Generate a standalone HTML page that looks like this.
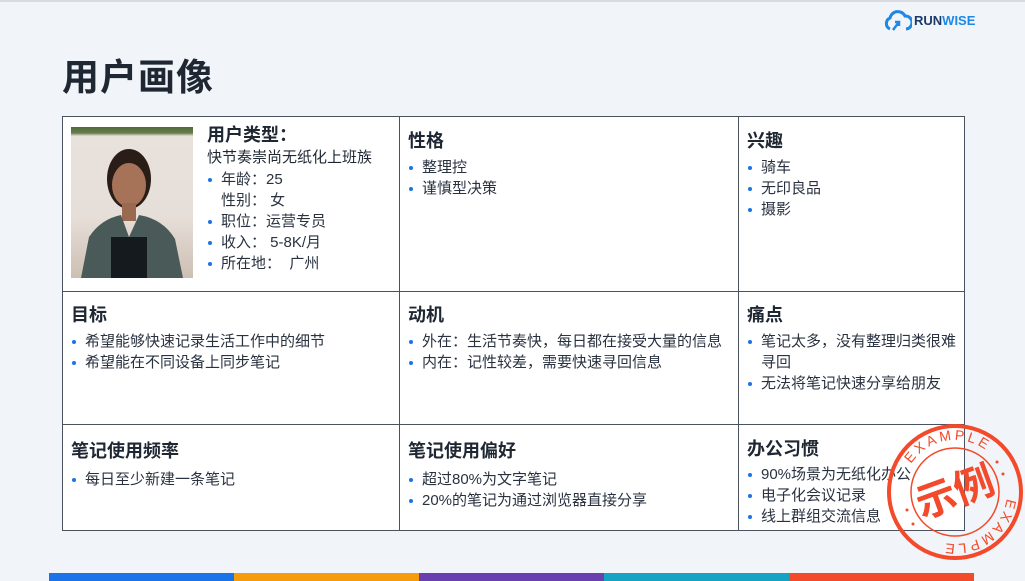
<!DOCTYPE html>
<html><head><meta charset="utf-8"><style>
*{margin:0;padding:0;box-sizing:border-box}
body{width:1025px;height:581px;background:#f1f4f8;font-family:"Liberation Sans","Noto Sans CJK SC",sans-serif;color:#1f2733;position:relative;overflow:hidden}
.top{position:absolute;left:0;top:0;width:1025px;height:2px;background:#d8dbe0}
h1{position:absolute;left:62px;top:54px;font-size:37px;font-weight:700;color:#1f2733;letter-spacing:1px;line-height:48px}
.tbl{position:absolute;left:62px;top:116px;width:903px;height:415px;background:#fff;border:1px solid #4a5260}
.c{position:absolute;padding:0 8px}
.vl{position:absolute;top:0;bottom:0;width:1px;background:#4a5260}
.hl{position:absolute;left:0;right:0;height:1px;background:#4a5260}
.h{font-size:18px;font-weight:700;line-height:24px;margin-bottom:4px}
ul{list-style:none}
li{font-size:15px;line-height:21px;position:relative;padding-left:14px;color:#2a3240}
li:before{content:"";position:absolute;left:1px;top:9px;width:4px;height:4px;border-radius:50%;background:#1a73e8}
li.n:before{display:none}
.photo{position:absolute;left:8px;top:10px;width:122px;height:151px;background:linear-gradient(180deg,#4d6b3a 0,#6a7d4f 4%,#e9e2dc 6%,#e6ded8 60%,#cdbfb3 100%);overflow:hidden}
.bar{position:absolute;top:573px;height:8px}
</style></head><body>
<div class="top"></div>
<svg style="position:absolute;left:884px;top:10px" width="28" height="22" viewBox="0 0 28 22"><path d="M6 19 A6 6 0 0 1 6 8 A8 8 0 0 1 21 6 A6.5 6.5 0 0 1 22 19" fill="none" stroke="#1e88e5" stroke-width="3"/><path d="M9 20 L15 12 M11 12 H15 V16" fill="none" stroke="#1e88e5" stroke-width="2.5"/></svg>
<div style="position:absolute;left:914px;top:13px;font-size:13px;font-weight:700;line-height:15px"><span style="color:#1b3a6b">RUN</span><span style="color:#1e88e5">WISE</span></div>
<h1>用户画像</h1>
<div class="tbl">
<div class="vl" style="left:336px"></div><div class="vl" style="left:675px"></div>
<div class="hl" style="top:174px"></div><div class="hl" style="top:307px"></div>

<div class="photo">
<svg width="122" height="151" viewBox="0 0 122 151"><ellipse cx="58" cy="52" rx="22" ry="30" fill="#2a1d17"/><ellipse cx="58" cy="58" rx="17" ry="22" fill="#a77358"/><rect x="51" y="76" width="14" height="18" fill="#9a6a50"/><path d="M10 151 L18 110 Q30 92 50 88 L58 110 L68 88 Q92 92 104 112 L112 151Z" fill="#4a5a58"/><path d="M40 110 H76 V151 H40Z" fill="#141a1e"/></svg></div>
<div class="c" style="left:136px;top:6px">
<div class="h" style="margin-bottom:0">用户类型：</div>
<div style="font-size:15px;line-height:22px">快节奏崇尚无纸化上班族</div>
<ul><li>年龄：25</li><li class="n">性别：&nbsp;女</li><li>职位：运营专员</li><li>收入：&nbsp;5-8K/月</li><li>所在地：&nbsp;&nbsp;广州</li></ul></div>
<div class="c" style="left:337px;top:12px"><div class="h">性格</div><ul><li>整理控</li><li>谨慎型决策</li></ul></div>
<div class="c" style="left:676px;top:12px"><div class="h">兴趣</div><ul><li>骑车</li><li>无印良品</li><li>摄影</li></ul></div>

<div class="c" style="left:0;top:186px"><div class="h">目标</div><ul><li>希望能够快速记录生活工作中的细节</li><li>希望能在不同设备上同步笔记</li></ul></div>
<div class="c" style="left:337px;top:186px"><div class="h">动机</div><ul><li>外在：生活节奏快，每日都在接受大量的信息</li><li>内在：记性较差，需要快速寻回信息</li></ul></div>
<div class="c" style="left:676px;top:186px;width:226px"><div class="h">痛点</div><ul><li>笔记太多，没有整理归类很难寻回</li><li>无法将笔记快速分享给朋友</li></ul></div>

<div class="c" style="left:0;top:322px"><div class="h" style="margin-bottom:6px">笔记使用频率</div><ul><li>每日至少新建一条笔记</li></ul></div>
<div class="c" style="left:337px;top:322px"><div class="h" style="margin-bottom:6px">笔记使用偏好</div><ul><li>超过80%为文字笔记</li><li>20%的笔记为通过浏览器直接分享</li></ul></div>
<div class="c" style="left:676px;top:320px"><div class="h" style="margin-bottom:3px">办公习惯</div><ul><li>90%场景为无纸化办公</li><li>电子化会议记录</li><li>线上群组交流信息</li></ul></div>
</div>
<svg style="position:absolute;left:885px;top:422px" width="140" height="140" viewBox="0 0 140 140">
<defs><path id="cp" d="M18 70 a52 52 0 1 1 104 0 a52 52 0 1 1 -104 0"/></defs>
<g fill="none" stroke="#f24a2a"><circle cx="70" cy="70" r="66" stroke-width="4"/><circle cx="70" cy="70" r="44" stroke-width="1.5"/></g>
<g fill="#f24a2a" font-size="14" font-family="Liberation Sans,sans-serif" letter-spacing="3">
<text><textPath href="#cp" startOffset="9%">EXAMPLE</textPath></text>
<text><textPath href="#cp" startOffset="52%">EXAMPLE</textPath></text></g>
<g fill="#f24a2a"><circle cx="22" cy="88" r="1.5"/><circle cx="28" cy="102" r="1.5"/><circle cx="118" cy="52" r="1.5"/><circle cx="112" cy="40" r="1.5"/></g>
<text x="70" y="84" text-anchor="middle" font-size="40" font-weight="700" fill="#f24a2a" transform="rotate(-20 70 70)" font-family="Noto Sans CJK SC,sans-serif">示例</text>
</svg>
<div class="bar" style="left:49px;width:185px;background:#1a73e8"></div>
<div class="bar" style="left:234px;width:185px;background:#f59b0c"></div>
<div class="bar" style="left:419px;width:185px;background:#6a3fb0"></div>
<div class="bar" style="left:604px;width:185px;background:#14a3c2"></div>
<div class="bar" style="left:789px;width:185px;background:#f24a2a"></div>
</body></html>
